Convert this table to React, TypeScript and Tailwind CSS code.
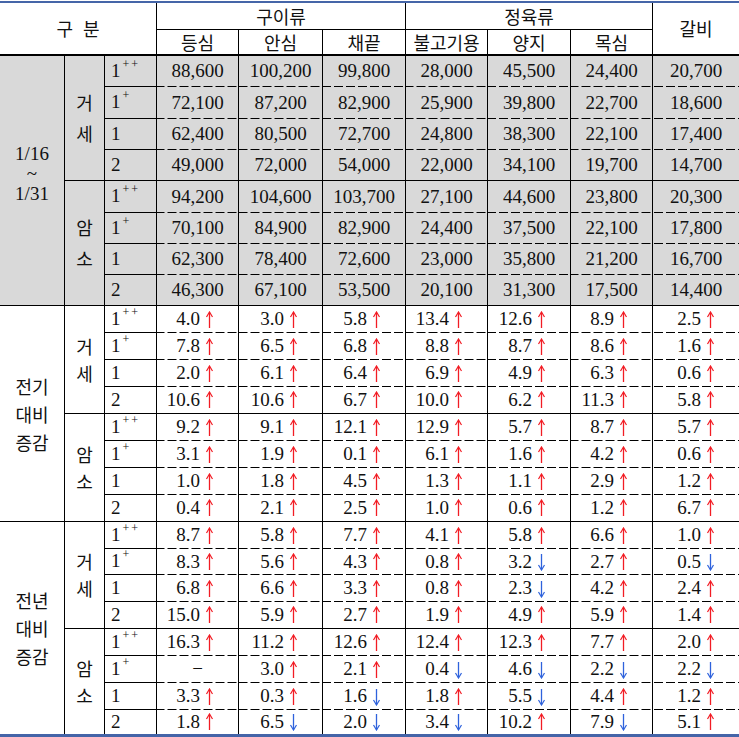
import React from 'react';

type Row = string[];
type Group = { name: [string, string]; rows: Row[] };
type Section = { label: string[]; kind: 'price' | 'pct'; groups: Group[] };

const GRADES = ['1++', '1+', '1', '2'];

const SECTIONS: Section[] = [
  {
    label: ['1/16', '~', '1/31'],
    kind: 'price',
    groups: [
      {
        name: ['거', '세'],
        rows: [
          ['88,600', '100,200', '99,800', '28,000', '45,500', '24,400', '20,700'],
          ['72,100', '87,200', '82,900', '25,900', '39,800', '22,700', '18,600'],
          ['62,400', '80,500', '72,700', '24,800', '38,300', '22,100', '17,400'],
          ['49,000', '72,000', '54,000', '22,000', '34,100', '19,700', '14,700'],
        ],
      },
      {
        name: ['암', '소'],
        rows: [
          ['94,200', '104,600', '103,700', '27,100', '44,600', '23,800', '20,300'],
          ['70,100', '84,900', '82,900', '24,400', '37,500', '22,100', '17,800'],
          ['62,300', '78,400', '72,600', '23,000', '35,800', '21,200', '16,700'],
          ['46,300', '67,100', '53,500', '20,100', '31,300', '17,500', '14,400'],
        ],
      },
    ],
  },
  {
    label: ['전기', '대비', '증감'],
    kind: 'pct',
    groups: [
      {
        name: ['거', '세'],
        rows: [
          ['4.0u', '3.0u', '5.8u', '13.4u', '12.6u', '8.9u', '2.5u'],
          ['7.8u', '6.5u', '6.8u', '8.8u', '8.7u', '8.6u', '1.6u'],
          ['2.0u', '6.1u', '6.4u', '6.9u', '4.9u', '6.3u', '0.6u'],
          ['10.6u', '10.6u', '6.7u', '10.0u', '6.2u', '11.3u', '5.8u'],
        ],
      },
      {
        name: ['암', '소'],
        rows: [
          ['9.2u', '9.1u', '12.1u', '12.9u', '5.7u', '8.7u', '5.7u'],
          ['3.1u', '1.9u', '0.1u', '6.1u', '1.6u', '4.2u', '0.6u'],
          ['1.0u', '1.8u', '4.5u', '1.3u', '1.1u', '2.9u', '1.2u'],
          ['0.4u', '2.1u', '2.5u', '1.0u', '0.6u', '1.2u', '6.7u'],
        ],
      },
    ],
  },
  {
    label: ['전년', '대비', '증감'],
    kind: 'pct',
    groups: [
      {
        name: ['거', '세'],
        rows: [
          ['8.7u', '5.8u', '7.7u', '4.1u', '5.8u', '6.6u', '1.0u'],
          ['8.3u', '5.6u', '4.3u', '0.8u', '3.2d', '2.7u', '0.5d'],
          ['6.8u', '6.6u', '3.3u', '0.8u', '2.3d', '4.2u', '2.4u'],
          ['15.0u', '5.9u', '2.7u', '1.9u', '4.9u', '5.9u', '1.4u'],
        ],
      },
      {
        name: ['암', '소'],
        rows: [
          ['16.3u', '11.2u', '12.6u', '12.4u', '12.3u', '7.7u', '2.0u'],
          ['-', '3.0u', '2.1u', '0.4d', '4.6d', '2.2d', '2.2d'],
          ['3.3u', '0.3u', '1.6d', '1.8u', '5.5d', '4.4u', '1.2u'],
          ['1.8u', '6.5d', '2.0d', '3.4d', '10.2u', '7.9d', '5.1u'],
        ],
      },
    ],
  },
];

const KO = "font-['Noto_Sans_CJK_KR',sans-serif] text-[18px]";
const NUM = "font-['Liberation_Serif','Noto_Sans_CJK_KR',serif] text-[19px]";
const DASHED =
  'bg-[linear-gradient(to_right,#000_9px,transparent_9px)] bg-[length:12px_1px] bg-bottom bg-repeat-x';

function Arrow({ up }: { up: boolean }) {
  return (
    <svg
      width="9"
      height="18"
      viewBox="0 0 9 18"
      className={up ? 'text-[#f21c24]' : 'text-[#2e62dc]'}
    >
      {up ? (
        <>
          <path d="M4.5 1.5V17" stroke="currentColor" strokeWidth="1.3" />
          <path d="M1.5 6L4.5 1L7.5 6" stroke="currentColor" strokeWidth="1.2" fill="none" />
        </>
      ) : (
        <>
          <path d="M4.5 1V16.5" stroke="currentColor" strokeWidth="1.3" />
          <path d="M1.5 12L4.5 17L7.5 12" stroke="currentColor" strokeWidth="1.2" fill="none" />
        </>
      )}
    </svg>
  );
}

function Grade({ g }: { g: string }) {
  const sup = g.slice(1);
  return (
    <span className={NUM}>
      {g[0]}
      {sup && (
        <span className="relative -top-[9px] ml-[2px] text-[12px] tracking-[2px]">{sup}</span>
      )}
    </span>
  );
}

function PctValue({ v }: { v: string }) {
  if (v === '-') {
    return <span className={NUM}>−</span>;
  }
  const up = v.endsWith('u');
  return (
    <>
      <span className={NUM}>{v.slice(0, -1)}</span>
      <span className="ml-[5px] flex">
        <Arrow up={up} />
      </span>
    </>
  );
}

export default function App() {
  const cells: React.ReactNode[] = [];

  SECTIONS.forEach((sec, si) => {
    const gray = si === 0 ? 'bg-[#d9d9d9]' : 'bg-white';
    const lastSec = si === SECTIONS.length - 1;
    const nameLeading = si === 0 ? 'leading-[31px]' : 'leading-[27px]';

    sec.groups.forEach((grp, gi) => {
      const lastGrp = gi === sec.groups.length - 1;
      grp.rows.forEach((row, ri) => {
        const lastRow = ri === grp.rows.length - 1;
        const finalRow = lastSec && lastGrp && lastRow;

        if (gi === 0 && ri === 0) {
          cells.push(
            <div
              key={`s${si}`}
              className={`row-span-8 flex flex-col items-center justify-center border-r border-black ${gray} ${
                lastSec ? '' : 'border-b'
              } ${si === 0 ? `${NUM} leading-[20px] pb-[14px]` : `${KO} leading-[28px]`}`}
            >
              {sec.label.map((l) => (
                <span key={l}>{l}</span>
              ))}
            </div>
          );
        }

        if (ri === 0) {
          cells.push(
            <div
              key={`g${si}-${gi}`}
              className={`row-span-4 flex flex-col items-center justify-center border-r border-black ${gray} ${KO} ${nameLeading} ${
                lastSec && lastGrp ? '' : 'border-b'
              }`}
            >
              <span>{grp.name[0]}</span>
              <span>{grp.name[1]}</span>
            </div>
          );
        }

        cells.push(
          <div
            key={`r${si}-${gi}-${ri}`}
            className={`flex items-center pl-[6px] border-r border-black ${gray} ${finalRow ? '' : 'border-b'}`}
          >
            <Grade g={GRADES[ri]} />
          </div>
        );

        row.forEach((v, ci) => {
          const lastCol = ci === row.length - 1;
          const bottom = finalRow ? '' : lastRow ? 'border-b' : DASHED;
          const align =
            sec.kind === 'price'
              ? 'justify-center'
              : v === '-'
              ? 'justify-center'
              : 'justify-end pr-[24px]';
          cells.push(
            <div
              key={`c${si}-${gi}-${ri}-${ci}`}
              className={`flex items-center border-black ${align} ${gray} ${bottom} ${
                lastCol ? '' : 'border-r'
              }`}
            >
              {sec.kind === 'price' ? <span className={NUM}>{v}</span> : <PctValue v={v} />}
            </div>
          );
        });
      });
    });
  });

  return (
    <div className="w-[739px] h-[737px] bg-white pt-px text-[#111]">
      <div className="grid grid-cols-[65px_40px_52px_82px_84px_83px_82px_83px_82px_86px] grid-rows-[27px_26px_31px_32px_31px_31px_32px_31px_31px_31px_27px_27px_27px_27px_27px_27px_27px_27px_27px_26px_27px_27px_27px_27px_27px_24px] border-t-2 border-b-[3px] border-[#4565a8]">
        {/* Header */}
        <div className={`col-span-3 row-span-2 flex items-center justify-center gap-[10px] border-r border-b-2 border-black ${KO}`}>
          <span>구</span>
          <span>분</span>
        </div>
        <div className={`col-span-3 flex items-center justify-center border-r border-b border-black ${KO}`}>
          구이류
        </div>
        <div className={`col-span-3 flex items-center justify-center border-r border-b border-black ${KO}`}>
          정육류
        </div>
        <div className={`row-span-2 flex items-center justify-center border-b-2 border-black ${KO}`}>
          갈비
        </div>
        {['등심', '안심', '채끝', '불고기용', '양지', '목심'].map((h) => (
          <div
            key={h}
            className={`flex items-center justify-center border-r border-b-2 border-black ${KO}`}
          >
            {h}
          </div>
        ))}

        {cells}
      </div>
    </div>
  );
}
